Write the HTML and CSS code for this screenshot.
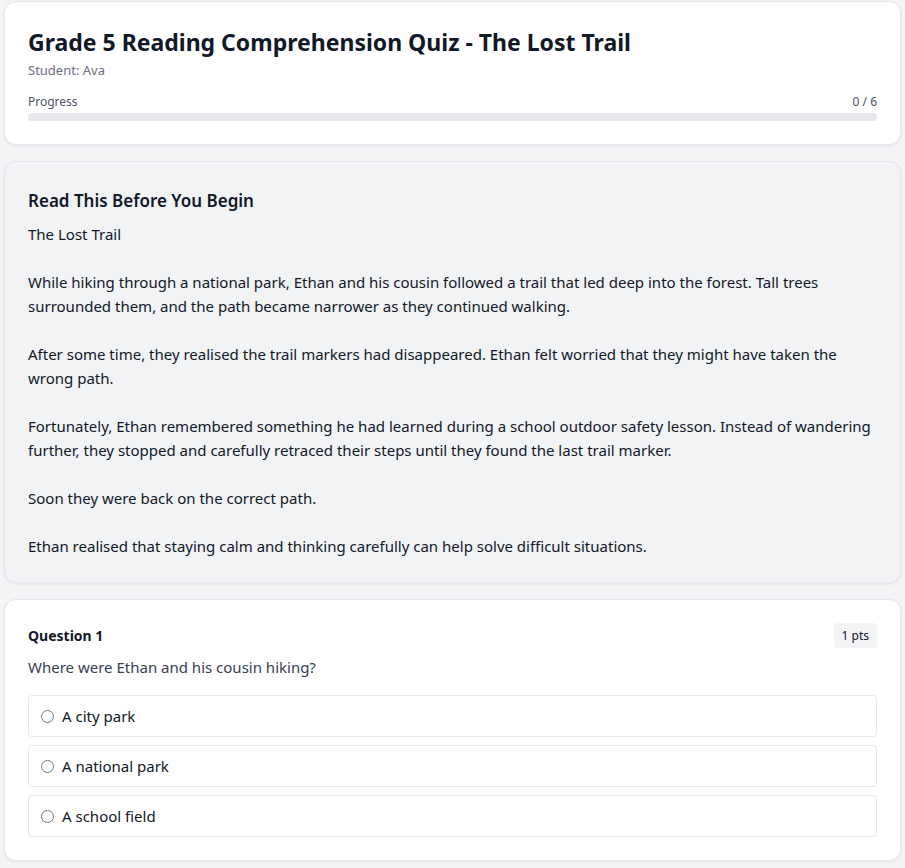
FILE: index.html
```html
<!DOCTYPE html>
<html lang="en">
<head>
<meta charset="utf-8">
<title>Grade 5 Reading Comprehension Quiz</title>
<link rel="stylesheet" href="styles.css">
</head>
<body>
<div class="page">
  <section class="card header-card">
    <h1 class="title">Grade 5 Reading Comprehension Quiz - The Lost Trail</h1>
    <div class="student">Student: Ava</div>
    <div class="progress-row">
      <span>Progress</span>
      <span>0 / 6</span>
    </div>
    <div class="progress-bar"><div class="progress-fill" style="width:0%"></div></div>
  </section>

  <section class="card passage-card">
    <h2 class="passage-title">Read This Before You Begin</h2>
    <div class="passage-text">The Lost Trail

While hiking through a national park, Ethan and his cousin followed a trail that led deep into the forest. Tall trees surrounded them, and the path became narrower as they continued walking.

After some time, they realised the trail markers had disappeared. Ethan felt worried that they might have taken the wrong path.

Fortunately, Ethan remembered something he had learned during a school outdoor safety lesson. Instead of wandering further, they stopped and carefully retraced their steps until they found the last trail marker.

Soon they were back on the correct path.

Ethan realised that staying calm and thinking carefully can help solve difficult situations.</div>
  </section>

  <section class="card question-card">
    <div class="q-head">
      <span class="q-label">Question 1</span>
      <span class="pts">1 pts</span>
    </div>
    <p class="q-text">Where were Ethan and his cousin hiking?</p>
    <div class="options">
      <label class="option"><input type="radio" name="q1"><span>A city park</span></label>
      <label class="option"><input type="radio" name="q1"><span>A national park</span></label>
      <label class="option"><input type="radio" name="q1"><span>A school field</span></label>
    </div>
  </section>
</div>
</body>
</html>
```

FILE: styles.css
```css
* { box-sizing: border-box; }
html, body { margin: 0; padding: 0; }
body {
  background: #f3f4f6;
  font-family: "Noto Sans", "Open Sans", sans-serif;
  color: #111827;
}
.page {
  padding: 1px 4px 16px;
  display: flex;
  flex-direction: column;
  gap: 16px;
}
.card {
  background: #ffffff;
  border: 1px solid #e5e7eb;
  border-radius: 12px;
  box-shadow: 0 1px 3px rgba(0,0,0,0.08);
  padding: 23px 23px;
}
.title {
  margin: 0;
  font-size: 23px;
  font-weight: 700;
  line-height: 34px;
  color: #111827;
}
.student {
  font-size: 13px;
  color: #6b7280;
  margin-top: 2px;
  line-height: 18px;
}
.progress-row {
  display: flex;
  justify-content: space-between;
  font-size: 12px;
  color: #4b5563;
  margin-top: 15px;
  line-height: 16px;
}
.progress-bar {
  margin-top: 3px;
  height: 8px;
  border-radius: 999px;
  background: #e5e7eb;
  overflow: hidden;
}
.progress-fill { height: 100%; background: #3b82f6; }

.passage-card {
  background: #f2f3f5;
  padding-top: 26px;
  padding-bottom: 24px;
}
.passage-title {
  margin: 0 0 8px;
  font-size: 17px;
  font-weight: 600;
  line-height: 26px;
}
.passage-text {
  white-space: pre-wrap;
  font-size: 15px;
  line-height: 24px;
  color: #111827;
}

.question-card { padding-top: 23px; }
.q-head {
  display: flex;
  justify-content: space-between;
  align-items: center;
}
.q-label { font-size: 14px; font-weight: 700; }
.pts {
  font-size: 12px;
  background: #f3f4f6;
  border-radius: 4px;
  padding: 4px 8px;
}
.q-text {
  margin: 9px 0 18px;
  font-size: 15px;
  color: #374151;
  line-height: 20px;
}
.options { display: flex; flex-direction: column; gap: 8px; }
.option {
  display: flex;
  align-items: center;
  gap: 8px;
  height: 42px;
  padding: 0 12px;
  border: 1px solid #e5e7eb;
  border-radius: 4px;
  font-size: 15px;
  color: #111827;
}
.option input { margin: 0; width: 13px; height: 13px; }
```
